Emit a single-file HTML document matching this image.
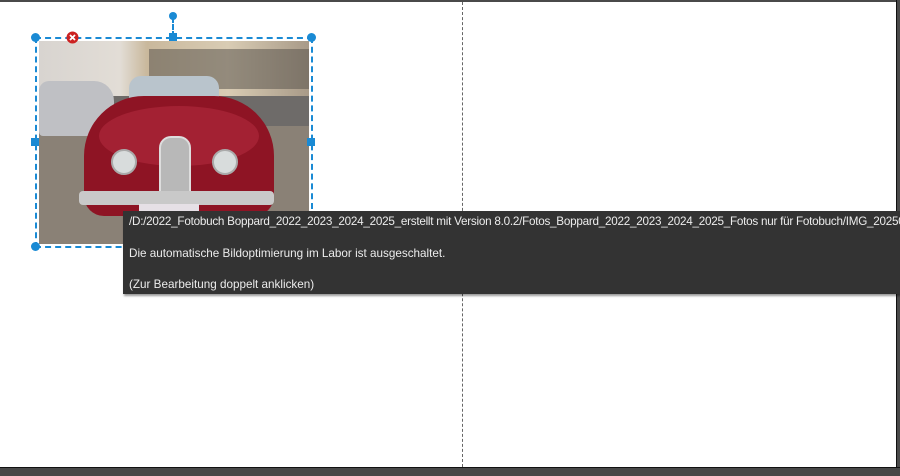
<!DOCTYPE html>
<html><head><meta charset="utf-8"><style>
html,body{margin:0;padding:0}
body{width:900px;height:475px;position:relative;overflow:hidden;background:#fff;font-family:"Liberation Sans",sans-serif}
.abs{position:absolute}
.tt{left:123px;top:211px;width:777px;height:83px;background:#333;box-shadow:1px 2px 2px rgba(0,0,0,.4);color:#ececec;font-size:11.7px;white-space:nowrap;overflow:hidden}
.tt div{position:absolute;left:6px}
.h{background:#1a8ad4}
</style></head><body>
<div class="abs" style="left:0;top:0;width:900px;height:2px;background:#4a4a4a"></div>
<div class="abs" style="left:896px;top:0;width:4px;height:475px;background:#4a4a4a;border-left:1px solid #111"></div>
<div class="abs" style="left:0;top:467px;width:900px;height:8px;background:#474747;border-top:1px solid #111"></div>
<div class="abs" style="left:462px;top:2px;height:465px;border-left:1px dashed #666"></div>

<!-- photo -->
<div class="abs" style="left:39px;top:41px;width:270px;height:203px;overflow:hidden;background:#8b8378">
  <div class="abs" style="left:0;top:0;width:270px;height:55px;background:linear-gradient(90deg,#d8d4d0 0,#e2ddd6 30%,#c9b89c 40%,#d9ccb4 70%,#a89a88 100%)"></div>
  <div class="abs" style="left:110px;top:8px;width:160px;height:40px;background:#5b564f;opacity:.55"></div>
  <div class="abs" style="left:0;top:55px;width:270px;height:30px;background:#6e6b69"></div>
  <div class="abs" style="left:0;top:85px;width:270px;height:118px;background:#8a8176"></div>
  <div class="abs" style="left:0;top:40px;width:75px;height:55px;background:#bfc0c4;border-radius:10px 20px 4px 4px"></div>
  <div class="abs" style="left:90px;top:35px;width:90px;height:30px;background:#b9c4cc;border-radius:12px 12px 0 0"></div>
  <div class="abs" style="left:45px;top:55px;width:190px;height:120px;background:#8e1424;border-radius:60px 60px 20px 20px"></div>
  <div class="abs" style="left:60px;top:65px;width:160px;height:60px;background:#b02a3e;border-radius:50%;opacity:.6"></div>
  <div class="abs" style="left:120px;top:95px;width:28px;height:60px;background:#b8b8b8;border-radius:12px 12px 4px 4px;border:2px solid #ddd"></div>
  <div class="abs" style="left:72px;top:108px;width:22px;height:22px;background:#d8dcdc;border-radius:50%;border:2px solid #aaa"></div>
  <div class="abs" style="left:173px;top:108px;width:22px;height:22px;background:#d8dcdc;border-radius:50%;border:2px solid #aaa"></div>
  <div class="abs" style="left:40px;top:150px;width:195px;height:14px;background:#c9c9c9;border-radius:4px"></div>
  <div class="abs" style="left:100px;top:163px;width:60px;height:12px;background:#e6e0e6"></div>
</div>

<!-- selection -->
<div class="abs" style="left:35px;top:37px;width:274px;height:207px;border:2px dashed #1a8ad4"></div>
<div class="abs" style="left:172px;top:17px;height:20px;border-left:2px dashed #1a8ad4"></div>
<div class="abs h" style="left:169px;top:12px;width:8px;height:8px;border-radius:50%"></div>
<div class="abs h" style="left:31px;top:33px;width:9px;height:9px;border-radius:50%"></div>
<div class="abs h" style="left:307px;top:33px;width:9px;height:9px;border-radius:50%"></div>
<div class="abs h" style="left:31px;top:242px;width:9px;height:9px;border-radius:50%"></div>
<div class="abs h" style="left:307px;top:242px;width:9px;height:9px;border-radius:50%"></div>
<div class="abs h" style="left:169px;top:33px;width:8px;height:8px"></div>
<div class="abs h" style="left:31px;top:138px;width:8px;height:8px"></div>
<div class="abs h" style="left:307px;top:138px;width:8px;height:8px"></div>
<svg class="abs" style="left:66px;top:31px" width="13" height="13" viewBox="0 0 13 13"><circle cx="6.5" cy="6.5" r="6" fill="#cc2222"/><path d="M4 4L9 9M9 4L4 9" stroke="#fff" stroke-width="1.8"/></svg>

<div class="abs tt">
  <div style="top:4px;letter-spacing:-0.25px">/D:/2022_Fotobuch Boppard_2022_2023_2024_2025_erstellt mit Version 8.0.2/Fotos_Boppard_2022_2023_2024_2025_Fotos nur für Fotobuch/IMG_20250</div>
  <div style="top:36px">Die automatische Bildoptimierung im Labor ist ausgeschaltet.</div>
  <div style="top:67px">(Zur Bearbeitung doppelt anklicken)</div>
</div>
</body></html>
